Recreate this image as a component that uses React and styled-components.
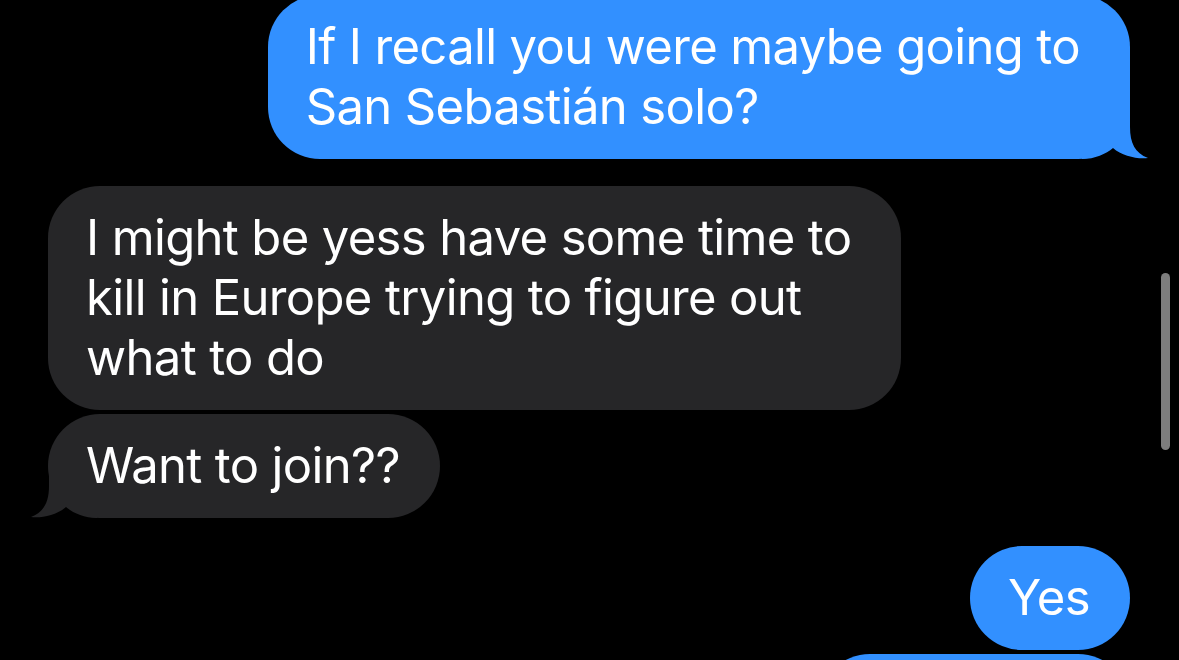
import React from 'react';
import styled, { createGlobalStyle } from 'styled-components';

const GlobalStyle = createGlobalStyle`
  html, body {
    margin: 0;
    padding: 0;
    background: #000;
  }
  body {
    font-family: Inter, "Noto Sans", "Liberation Sans", sans-serif;
    -webkit-font-smoothing: antialiased;
  }
`;

const SENT = '#3290ff';
const RECEIVED = '#262628';

const Screen = styled.div`
  position: relative;
  width: 1179px;
  height: 660px;
  overflow: hidden;
  background: #000;
`;

const Thread = styled.div`
  display: flex;
  flex-direction: column;
  margin-top: -5px;
  padding: 0 49px 0 48px;
`;

const Bubble = styled.div`
  position: relative;
  align-self: ${(p) => (p.$sent ? 'flex-end' : 'flex-start')};
  margin-top: ${(p) => p.$gap || 0}px;
  padding: 22px ${(p) => (p.$multi ? 50 : 40)}px 22px 38px;
  border-radius: 52px;
  background: ${(p) => (p.$sent ? SENT : RECEIVED)};
  color: #fff;
  font-size: 49px;
  font-weight: 400;
  line-height: 60px;
  letter-spacing: -0.65px;
  white-space: pre-line;
`;

const BubbleText = styled.span`
  position: relative;
  z-index: 1;
`;

const TailSvg = styled.svg`
  position: absolute;
  bottom: 0;
  ${(p) => (p.$sent ? 'right: -18px;' : 'left: -17px; transform: scaleX(-1);')}
  width: 68px;
  height: 58px;
  display: block;
`;

const Tail = ({ sent }) => (
  <TailSvg $sent={sent} viewBox="0 0 68 58">
    <path
      d="M 50 0 L 50 26 C 50 42, 55 52, 68 57 C 58 58.5, 42 55, 33 47 C 26 53, 15 58, 2 58 L 2 0 Z"
      fill={sent ? SENT : RECEIVED}
    />
  </TailSvg>
);

const ScrollIndicator = styled.div`
  position: absolute;
  top: 273px;
  right: 9px;
  width: 9px;
  height: 177px;
  border-radius: 5px;
  background: #7d7d7d;
`;

const messages = [
  { sent: true, text: 'If I recall you were maybe going to\nSan Sebastián solo?', tail: true, gap: 0 },
  {
    sent: false,
    text: 'I might be yess have some time to\nkill in Europe trying to figure out\nwhat to do',
    gap: 27,
  },
  { sent: false, text: 'Want to join??', tail: true, gap: 4 },
  { sent: true, text: 'Yes', gap: 28 },
  { sent: true, text: "Let's do it!", gap: 4 },
];

const App = () => {
  return (
    <Screen>
      <GlobalStyle />
      <Thread>
        {messages.map((m, i) => (
          <Bubble key={i} $sent={m.sent} $gap={m.gap} $multi={m.text.includes('\n')}>
            {m.tail && <Tail sent={m.sent} />}
            <BubbleText>{m.text}</BubbleText>
          </Bubble>
        ))}
      </Thread>
      <ScrollIndicator />
    </Screen>
  );
};

export default App;
